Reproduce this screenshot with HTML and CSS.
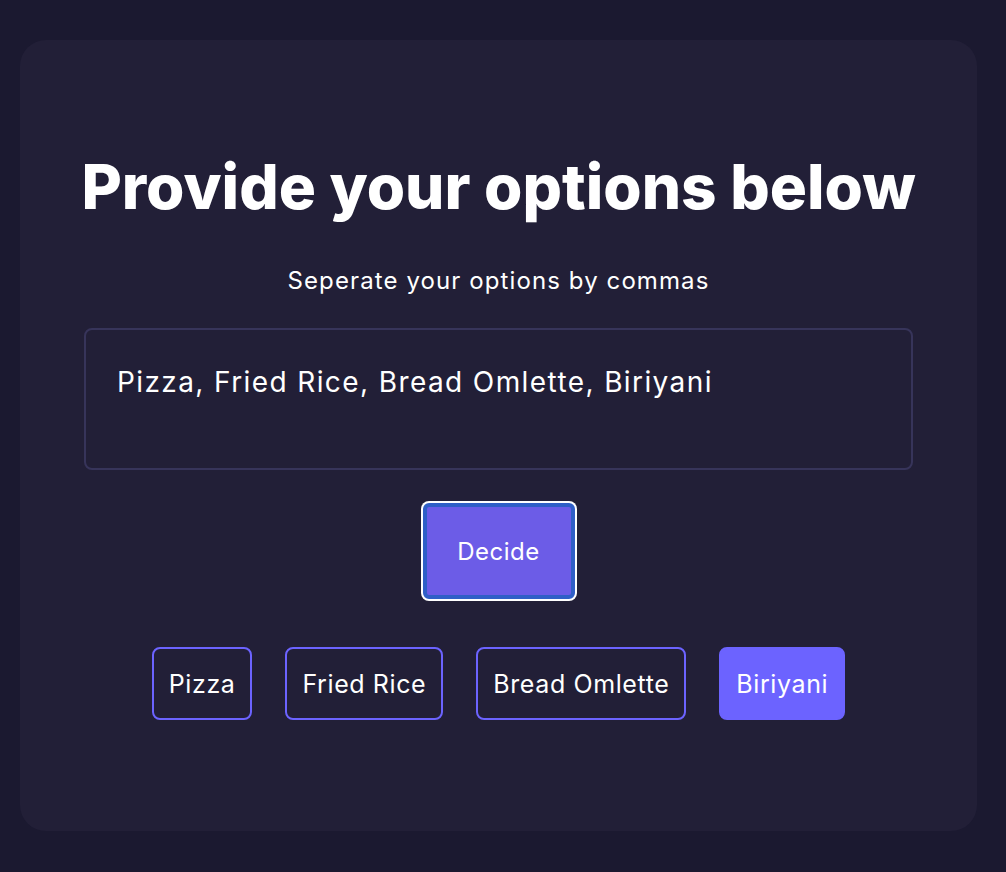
FILE: index.html
```html
<!DOCTYPE html>
<html lang="en">
<head>
<meta charset="utf-8">
<title>Decider</title>
<link rel="stylesheet" href="styles.css">
</head>
<body>
<main class="card">
  <h1 class="title">Provide your options below</h1>
  <p class="subtitle">Seperate your options by commas</p>
  <textarea class="options-input">Pizza, Fried Rice, Bread Omlette, Biriyani</textarea>
  <button class="decide-btn">Decide</button>
  <div class="chips">
    <span class="chip">Pizza</span>
    <span class="chip">Fried Rice</span>
    <span class="chip">Bread Omlette</span>
    <span class="chip chip-active">Biriyani</span>
  </div>
</main>
</body>
</html>
```
FILE: styles.css
```css
* { box-sizing: border-box; }
html, body {
  margin: 0;
  padding: 0;
  background: #1b1930;
  font-family: Inter, "Noto Sans", sans-serif;
  color: #ffffff;
}
body {
  padding: 40px 29px 41px 20px;
}
.card {
  background: #221f37;
  border-radius: 26px;
  height: 791px;
  display: flex;
  flex-direction: column;
  align-items: center;
  padding-top: 111px;
}
.title {
  margin: 0;
  font-size: 62px;
  font-weight: 800;
  line-height: 72px;
  letter-spacing: 0;
}
.subtitle {
  margin: 43px 0 0;
  font-size: 24px;
  line-height: 30px;
  font-weight: 400;
  letter-spacing: 1.1px;
}
.options-input {
  margin-top: 32px;
  width: 829px;
  height: 142px;
  background: transparent;
  border: 2px solid #37345a;
  border-radius: 8px;
  color: #ffffff;
  font-family: inherit;
  font-size: 28px;
  line-height: 34px;
  letter-spacing: 1.4px;
  padding: 35px 31px;
  resize: none;
  outline: none;
}
.decide-btn {
  margin-top: 33px;
  width: 152px;
  height: 96px;
  background: #6c5ce7;
  color: #ffffff;
  font-family: inherit;
  font-size: 24px;
  letter-spacing: 0.5px;
  border: 4px solid #2f5fc7;
  border-radius: 6px;
  box-shadow: 0 0 0 2px #ffffff;
  cursor: pointer;
}
.chips {
  margin-top: 48px;
  display: flex;
  gap: 33px;
}
.chip {
  display: flex;
  align-items: center;
  height: 73px;
  padding: 0 15px;
  border: 2px solid #6c63ff;
  border-radius: 8px;
  font-size: 25px;
  letter-spacing: 0.6px;
}
.chip-active {
  background: #6c63ff;
}
```
